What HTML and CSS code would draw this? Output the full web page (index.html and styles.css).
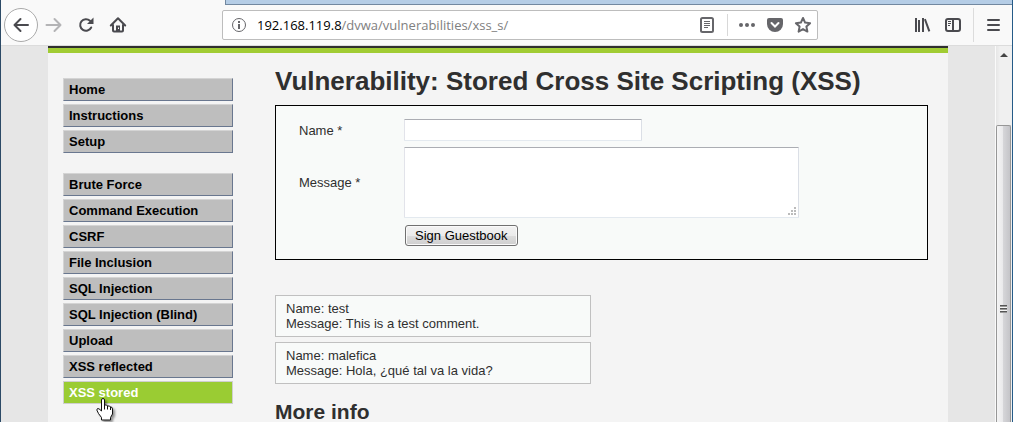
FILE: index.html
```html
<!DOCTYPE html>
<html lang="en">
<head>
<meta charset="utf-8">
<title>Vulnerability: Stored Cross Site Scripting (XSS)</title>
<link rel="stylesheet" href="styles.css">
</head>
<body>
<div class="window">
  <div class="tabstrip"></div>
  <header class="toolbar">
    <div class="nav">
      <button class="icon-btn back" aria-label="Back"><svg width="18" height="18" viewBox="0 0 18 18"><path d="M16 9H3M8.500 3L2.500 9l6 6" class="s2"/></svg></button>
      <button class="icon-btn forward" aria-label="Forward"><svg width="18" height="18" viewBox="0 0 18 18"><path d="M1.500 9H15M9.500 3l6 6l-6 6" class="s2"/></svg></button>
      <button class="icon-btn reload" aria-label="Reload"><svg width="18" height="18" viewBox="0 0 18 18"><path d="M14.200 11.500A5.800 5.800 0 1 1 13 4.800" class="s2"/><path d="M16.500 1.500V8H10z"/></svg></button>
      <button class="icon-btn home" aria-label="Home"><svg width="18" height="18" viewBox="0 0 18 18"><path d="M1.800 9.500L9 2.300l7.200 7.200" class="s2"/><path d="M4 9v5.500q0 1 1 1h8q1 0 1-1V9" class="s2"/><path d="M7 15v-5.500h4V15z"/><path d="M9 11.500h1V13H9z" fill="#fff"/></svg></button>
    </div>
    <div class="urlbar">
      <button class="icon-btn info" aria-label="Site information"><svg width="16" height="16" viewBox="0 0 16 16"><circle cx="8" cy="8" r="6.500" class="s1"/><path d="M7 7h2v5H7zM7 4h2v2H7z"/></svg></button>
      <a class="address" href="#"><span class="host">192.168.119.8</span>/dvwa/vulnerabilities/xss_s/</a>
      <button class="icon-btn reader" aria-label="Reader view"><svg width="16" height="18" viewBox="0 0 16 18"><rect x="2" y="2" width="12" height="14" rx="1.500" class="s2"/><path d="M5 5.500h6M5 7.500h6M5 9.500h6M5 11.500h4" class="s1"/></svg></button>
      <span class="url-sep"></span>
      <button class="icon-btn" aria-label="Page actions"><svg width="18" height="18" viewBox="0 0 18 18"><circle cx="3" cy="9" r="2"/><circle cx="9" cy="9" r="2"/><circle cx="15" cy="9" r="2"/></svg></button>
      <button class="icon-btn" aria-label="Save to Pocket"><svg width="18" height="18" viewBox="0 0 18 18"><path d="M3 2h12q2 0 2 2v4a8 8 0 0 1-16 0V4q0-2 2-2z"/><path d="M5.500 7L9 10.500L12.500 7" class="check"/></svg></button>
      <button class="icon-btn" aria-label="Bookmark"><svg width="18" height="18" viewBox="0 0 18 18"><path d="M9 2l2.100 4.600l5 .6l-3.700 3.400l1 5L9 13.100l-4.400 2.500l1-5L1.900 7.200l5-.6z" class="s2"/></svg></button>
    </div>
    <div class="tools">
      <button class="icon-btn" aria-label="Library"><svg width="18" height="18" viewBox="0 0 18 18"><path d="M2 2h2v14H2zM5 4h2v12H5zM9 2h2v14H9zM11 3.500l1.800-.8L17.300 15l-1.900 .8z"/></svg></button>
      <button class="icon-btn" aria-label="Sidebars"><svg width="18" height="18" viewBox="0 0 18 18"><rect x="2" y="3" width="14" height="12" rx="2" class="s2"/><path d="M9 3v12" class="s2"/><path d="M4 5.500h3M4 7.500h3M4 9.500h2" class="s1"/></svg></button>
      <span class="tool-sep"></span>
      <button class="icon-btn" aria-label="Menu"><svg width="14" height="18" viewBox="0 0 14 18"><path d="M1 4h11M1 9h11M1 14h11" class="s2"/></svg></button>
    </div>
  </header>
  <div class="viewport">
    <div class="page">
      <div class="container">
        <nav class="menu">
          <ul>
            <li><a href="#">Home</a></li>
            <li><a href="#">Instructions</a></li>
            <li><a href="#">Setup</a></li>
          </ul>
          <ul>
            <li><a href="#">Brute Force</a></li>
            <li><a href="#">Command Execution</a></li>
            <li><a href="#">CSRF</a></li>
            <li><a href="#">File Inclusion</a></li>
            <li><a href="#">SQL Injection</a></li>
            <li><a href="#">SQL Injection (Blind)</a></li>
            <li><a href="#">Upload</a></li>
            <li><a href="#">XSS reflected</a></li>
            <li class="selected"><a href="#">XSS stored</a>
              <svg class="pointer" width="18" height="23" viewBox="0 0 18 23"><path d="M5.500 13V2q0-1.500 1.500-1.500T8.500 2v5q2.500-.5 3 1q2.500-.5 3 1q2-.2 2 2v5l-2 3.500v2.500h-9V19.500l-3-4L.8 12q.2-2.200 2.200-1.200z" fill="#fff" stroke="#111" stroke-linejoin="round"/><path d="M8.500 7v4.500M11.500 8v3.500M14.500 9v3" stroke="#111" fill="none"/></svg>
            </li>
          </ul>
        </nav>
        <main class="content">
          <h1>Vulnerability: Stored Cross Site Scripting (XSS)</h1>
          <form class="guestform">
            <label for="name">Name *</label>
            <input id="name" class="field name" type="text">
            <label for="message">Message *</label>
            <div class="message-box">
              <textarea id="message" class="field message"></textarea>
              <svg class="handle" width="8" height="8" viewBox="0 0 8 8"><path d="M6 0h2v2H6zM3 3h2v2H3zM6 3h2v2H6zM0 6h2v2H0zM3 6h2v2H3zM6 6h2v2H6z"/></svg>
            </div>
            <button class="sign" type="button">Sign Guestbook</button>
          </form>
          <div class="comments">
            <p>Name: test<br>Message: This is a test comment.</p>
            <p>Name: malefica<br>Message: Hola, ¿qué tal va la vida?</p>
          </div>
          <h2>More info</h2>
        </main>
      </div>
    </div>
    <div class="scrollbar">
      <svg class="up" width="8" height="5" viewBox="0 0 8 5"><path d="M4 0l4 4H0z"/></svg>
      <div class="thumb"><span class="grip"></span></div>
    </div>
  </div>
</div>
</body>
</html>
```
FILE: styles.css
```css
* { box-sizing: border-box; }

body {
  margin: 0;
  font-family: "Liberation Sans", Arial, sans-serif;
  font-size: 13px;
  line-height: 15px;
  color: #2f2f2f;
}

.window {
  display: flex;
  flex-direction: column;
  height: 100vh;
  overflow: hidden;
  border-left: 1px solid #2c4a66;
  border-right: 1px solid #255b88;
  background: #f9f9f9;
}

.tabstrip {
  flex: none;
  height: 5px;
  margin-left: 224px;
  background: #b5cde6;
  border-left: 1px solid #7288a0;
  border-bottom: 1px solid #7288a0;
}

/* Browser toolbar */
.toolbar {
  flex: none;
  display: flex;
  align-items: center;
  height: 41px;
  padding: 0 11px 0 3px;
  border-bottom: 1px solid #dcdcdc;
}

.icon-btn {
  display: flex;
  align-items: center;
  justify-content: center;
  padding: 0;
  border: 0;
  background: none;
  color: #4a4a4f;
}

svg { display: block; fill: currentColor; }
.s1, .s2, .check { fill: none; stroke: currentColor; }
.s1 { stroke-width: 1; }
.s2 { stroke-width: 2; stroke-linejoin: round; stroke-linecap: round; }
.check { stroke: #fff; stroke-width: 2; stroke-linecap: round; }

.nav { flex: none; display: flex; align-items: center; width: 218px; }
.back {
  width: 34px;
  height: 34px;
  border: 1px solid #aaa;
  border-radius: 50%;
  background: #fff;
}
.forward { margin-left: 7px; color: #b4b4b6; }
.reload { margin-left: 14px; }
.home { margin-left: 14px; }

.urlbar {
  flex: 1;
  display: flex;
  align-items: center;
  gap: 10px;
  height: 30px;
  padding: 0 5px 0 8px;
  border: 1px solid #bdbdbd;
  border-radius: 2px;
  background: #fff;
}
.urlbar .icon-btn { color: #66666a; }
.reader { margin-right: 2px; }
.address {
  flex: 1;
  font-family: "Open Sans", "Noto Sans", sans-serif;
  font-size: 13px;
  line-height: 18px;
  color: #808080;
  text-decoration: none;
}
.host { color: #000; }
.url-sep { width: 1px; height: 22px; background: #d8d8d8; }

.tools {
  flex: none;
  display: flex;
  align-items: center;
  gap: 13px;
  margin-left: 95px;
}
.tool-sep { width: 1px; height: 34px; margin-left: -2px; background: #dcdcdc; }

/* Page */
.viewport { flex: 1; display: flex; min-height: 0; }
.page {
  flex: 1;
  overflow: hidden;
  background: #e6e6e6;
}
.container {
  display: flex;
  max-width: 900px;
  min-height: 100%;
  margin: 0 auto;
  padding: 0 20px 0 15px;
  background: linear-gradient(#2f2f2f 2px, #a1cc33 2px, #a1cc33 7px, #f4f4f4 7px);
}

.menu { flex: none; width: 170px; padding-top: 32px; }
.menu ul {
  display: flex;
  flex-direction: column;
  gap: 3px;
  margin: 0 0 20px;
  padding: 0;
  list-style: none;
}
.menu li { position: relative; }
.menu a {
  display: block;
  height: 23px;
  padding: 3px 5px;
  border: 1px solid;
  border-color: #d4d4d4 #69778f #69778f #d4d4d4;
  background: #bebebe;
  color: #000;
  font-weight: bold;
  text-decoration: none;
}
.menu .selected a {
  border-color: #cfcfcf;
  background: #9acc33;
  color: #fff;
}
.pointer {
  position: absolute;
  left: 33px;
  top: 17px;
  filter: drop-shadow(2px 2px 1px rgba(0, 0, 0, .4));
}

.content { flex: 1; margin-left: 42px; }
h1 { margin: 20px 0 9px; font-size: 26px; line-height: 30px; }
h2 { margin: 17px 0; font-size: 21px; line-height: 22px; }

.guestform {
  display: grid;
  grid-template-columns: 105px 1fr;
  align-items: center;
  justify-items: start;
  row-gap: 6px;
  padding: 13px 23px;
  border: 1px solid #000;
  background: #f8faf9;
}
.field {
  display: block;
  margin: 0;
  border: 1px solid;
  border-color: #abadb3 #dbdfe6 #e3e9ef #e2e3ea;
  border-radius: 1px;
  background: #fff;
}
.name { width: 238px; height: 22px; }
.message-box { position: relative; }
.message { width: 395px; height: 71px; resize: none; }
.handle {
  position: absolute;
  right: 3px;
  bottom: 3px;
  color: #bbb;
}
.sign {
  grid-column: 2;
  height: 21px;
  margin: 1px 0 0 1px;
  padding: 0 9px;
  border: 1px solid #707070;
  border-radius: 3px;
  background: linear-gradient(#f2f2f2, #ebebeb 50%, #dddddd 50%, #cfcfcf);
  box-shadow: inset 0 0 0 1px #fafafa;
  font-family: inherit;
  font-size: 13px;
  color: #000;
}

.comments {
  display: flex;
  flex-direction: column;
  gap: 5px;
  width: 316px;
  margin-top: 35px;
}
.comments p {
  margin: 0;
  padding: 5px 10px;
  border: 1px solid #c0c0c0;
  background: #f8faf9;
}

/* Scrollbar */
.scrollbar {
  flex: none;
  display: flex;
  flex-direction: column;
  align-items: center;
  width: 17px;
  border-left: 1px solid #fafafa;
  background: linear-gradient(90deg, #e6e6e6, #f0f0f0 4px);
}
.up { margin: 7px 0 67px; color: #444; }
.thumb {
  flex: 1;
  display: flex;
  justify-content: center;
  align-self: stretch;
  margin-right: 1px;
  border: 1px solid #979797;
  border-bottom: 0;
  border-radius: 2px 2px 0 0;
  background: linear-gradient(90deg, #f5f5f5, #e9e9eb 45%, #d5d5d8 50%, #c4c4c8);
}
.grip {
  width: 7px;
  height: 8px;
  margin-top: 179px;
  background: repeating-linear-gradient(#555 0, #555 1px, #999 1px, #999 2px, #f4f4f4 2px, #f4f4f4 3px);
}
```
